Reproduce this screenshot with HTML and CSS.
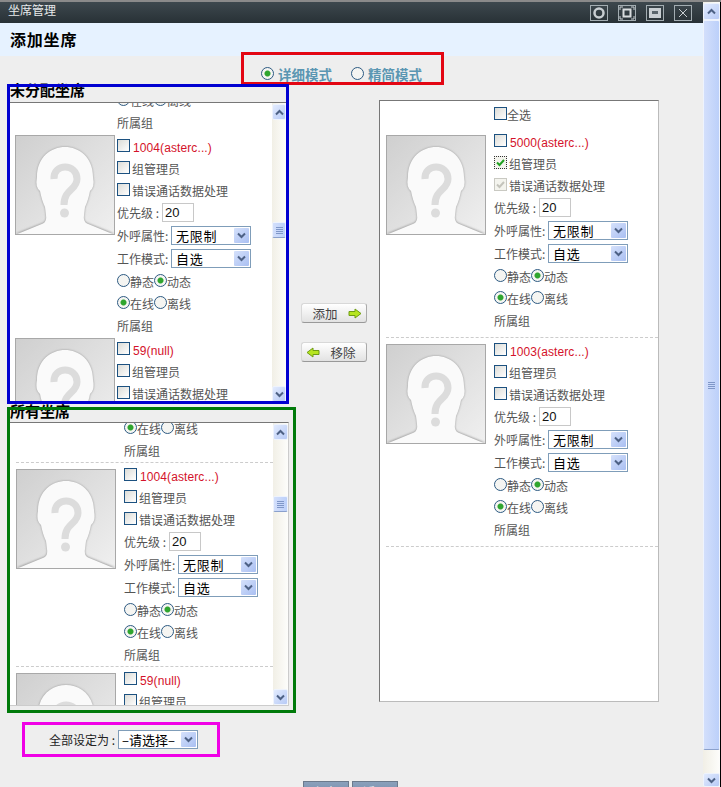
FILE: index.html
```html
<!DOCTYPE html>
<html lang="zh">
<head>
<meta charset="utf-8">
<title>坐席管理</title>
<link rel="stylesheet" href="styles.css">
</head>
<body>
<svg class="defs" aria-hidden="true">
  <defs>
    <linearGradient id="avbg" x1="0" y1="0" x2="1" y2="1">
      <stop offset="0" stop-color="#cfcfcf"/>
      <stop offset="1" stop-color="#f0f0f0"/>
    </linearGradient>
    <filter id="soft" x="-10%" y="-10%" width="120%" height="120%"><feGaussianBlur stdDeviation="1"/></filter>
    <symbol id="avatar" viewBox="0 0 100 100">
      <rect x="0" y="0" width="100" height="100" fill="url(#avbg)"/>
      <path d="M0 99 L28 88 Q32 86 31 80 L30 72 Q27 66 25 56 Q20 52 22 42 C22 22 36 12 50 12 C64 12 78 22 78 42 Q80 52 75 56 Q73 66 70 72 L69 80 Q68 86 72 88 L100 99 Z" fill="#999" filter="url(#soft)"/>
      <path d="M0 100 L28 88.500 Q32 86.500 31 80 L30 72 Q27 66 25 56 Q20 52 22 42 C22 22 36 12 50 12 C64 12 78 22 78 42 Q80 52 75 56 Q73 66 70 72 L69 80 Q68 86.500 72 88.500 L100 100 Z" fill="#fafafa"/>
      <path d="M39 44 C38 28 62 28 62 44 C62 55 49 54 49 70" fill="none" stroke="#dcdcdc" stroke-width="7"/>
      <circle cx="49.500" cy="78" r="4.500" fill="#dcdcdc"/>
      <rect x="0.500" y="0.500" width="99" height="99" fill="none" stroke="#a8a8a8"/>
    </symbol>
    <symbol id="down" viewBox="0 0 9 7"><path d="M1 1.500 L4.500 5 L8 1.500" fill="none" stroke="#4d6185" stroke-width="2"/></symbol>
    <symbol id="up" viewBox="0 0 9 7"><path d="M1 5.500 L4.500 2 L8 5.500" fill="none" stroke="#4d6185" stroke-width="2"/></symbol>
    <symbol id="grip" viewBox="0 0 7 7"><path d="M0 .5H7M0 2.500H7M0 4.500H7M0 6.500H7" stroke="#7f97c8"/></symbol>
    <symbol id="check" viewBox="0 0 11 11"><path d="M2 5.500 L4.500 8 L9 3" fill="none" stroke="currentColor" stroke-width="2"/></symbol>
  </defs>
</svg>

<div class="shell">
  <div class="content">
    <header class="titlebar">
      <span class="titlebar-text">坐席管理</span>
      <div class="winbtns">
        <span class="winbtn"><svg viewBox="0 0 16 14"><circle cx="8" cy="7" r="4.500" fill="none" stroke="#c8ced2" stroke-width="2.500"/></svg></span>
        <span class="winbtn"><svg viewBox="0 0 16 14"><path d="M1 4V1H4M12 1H15V4M15 10V13H12M4 13H1V10" fill="none" stroke="#c8ced2"/><rect x="4.500" y="3.500" width="7" height="7" fill="none" stroke="#d8dcde" stroke-width="2"/></svg></span>
        <span class="winbtn"><svg viewBox="0 0 16 14"><rect x="2" y="2" width="12" height="10" fill="#c8ced2"/><rect x="5" y="5" width="6" height="3" fill="#59646b"/></svg></span>
        <span class="winbtn"><svg viewBox="0 0 16 14"><path d="M4 3L12 11M12 3L4 11" stroke="#c8ced2"/></svg></span>
      </div>
    </header>
    <div class="subheader"><h1 class="page-title">添加坐席</h1></div>

    <div class="mode frame frame-red">
      <span class="radio on"></span><span class="mode-label">详细模式</span>
      <span class="radio mode-radio2"></span><span class="mode-label">精简模式</span>
    </div>

    <div class="main">
      <div class="left-col">
        <section class="frame frame-blue">
          <h2 class="box-title">未分配坐席</h2>
          <div class="panel panel-blue">
            <div class="scroller">
              <div class="tail tail-blue">
                <div class="row"><span class="radio on"></span>在线<span class="radio"></span>离线</div>
                <div class="row">所属组</div>
              </div>
              <div class="card card-plain">
                <svg class="avatar"><use href="#avatar"/></svg>
                <div class="rows">
                  <div class="row"><span class="cb"></span><span class="name">1004(asterc...)</span></div>
                  <div class="row"><span class="cb"></span><span class="lbl">组管理员</span></div>
                  <div class="row"><span class="cb"></span><span class="lbl">错误通话数据处理</span></div>
                  <div class="row row-t"><span class="pri">优先级 :</span><span class="input">20</span></div>
                  <div class="row row-t"><span class="key">外呼属性:</span><div class="select"><span>无限制</span><span class="sel-btn"><svg><use href="#down"/></svg></span></div></div>
                  <div class="row row-t"><span class="key">工作模式:</span><div class="select"><span>自选</span><span class="sel-btn"><svg><use href="#down"/></svg></span></div></div>
                  <div class="row"><span class="radio"></span>静态<span class="radio on"></span>动态</div>
                  <div class="row"><span class="radio on"></span>在线<span class="radio"></span>离线</div>
                  <div class="row">所属组</div>
                </div>
              </div>
              <div class="card card-plain">
                <svg class="avatar"><use href="#avatar"/></svg>
                <div class="rows">
                  <div class="row"><span class="cb"></span><span class="name">59(null)</span></div>
                  <div class="row"><span class="cb"></span><span class="lbl">组管理员</span></div>
                  <div class="row"><span class="cb"></span><span class="lbl">错误通话数据处理</span></div>
                </div>
              </div>
            </div>
            <div class="vbar vbar-blue">
              <span class="sb-btn"><svg><use href="#up"/></svg></span>
              <span class="sb-thumb"><svg><use href="#grip"/></svg></span>
              <span class="sb-btn sb-end"><svg><use href="#down"/></svg></span>
            </div>
          </div>
        </section>

        <section class="frame frame-green">
          <h2 class="box-title">所有坐席</h2>
          <div class="panel panel-green">
            <div class="scroller">
              <div class="tail tail-green">
                <div class="row"><span class="radio on"></span>在线<span class="radio"></span>离线</div>
                <div class="row">所属组</div>
              </div>
              <div class="card card-dash">
                <svg class="avatar"><use href="#avatar"/></svg>
                <div class="rows">
                  <div class="row"><span class="cb"></span><span class="name">1004(asterc...)</span></div>
                  <div class="row"><span class="cb"></span><span class="lbl">组管理员</span></div>
                  <div class="row"><span class="cb"></span><span class="lbl">错误通话数据处理</span></div>
                  <div class="row row-t"><span class="pri">优先级 :</span><span class="input">20</span></div>
                  <div class="row row-t"><span class="key">外呼属性:</span><div class="select"><span>无限制</span><span class="sel-btn"><svg><use href="#down"/></svg></span></div></div>
                  <div class="row row-t"><span class="key">工作模式:</span><div class="select"><span>自选</span><span class="sel-btn"><svg><use href="#down"/></svg></span></div></div>
                  <div class="row"><span class="radio"></span>静态<span class="radio on"></span>动态</div>
                  <div class="row"><span class="radio on"></span>在线<span class="radio"></span>离线</div>
                  <div class="row">所属组</div>
                </div>
              </div>
              <div class="card card-dash">
                <svg class="avatar"><use href="#avatar"/></svg>
                <div class="rows">
                  <div class="row"><span class="cb"></span><span class="name">59(null)</span></div>
                  <div class="row"><span class="cb"></span><span class="lbl">组管理员</span></div>
                </div>
              </div>
            </div>
            <div class="vbar vbar-green">
              <span class="sb-btn"><svg><use href="#up"/></svg></span>
              <span class="sb-thumb"><svg><use href="#grip"/></svg></span>
              <span class="sb-btn sb-end"><svg><use href="#down"/></svg></span>
            </div>
          </div>
        </section>

        <div class="frame frame-pink">
          <span class="setall">全部设定为 :</span>
          <div class="select select-all"><span>–请选择–</span><span class="sel-btn"><svg><use href="#down"/></svg></span></div>
        </div>
      </div>

      <div class="mid-col">
        <button class="move-btn move-add" type="button">添加<svg class="arrow" viewBox="0 0 14 11"><path d="M1 3.500H7V1L13 5.500L7 10V7.500H1Z" fill="#b6e51f" stroke="#6f9c14"/></svg></button>
        <button class="move-btn move-del" type="button"><svg class="arrow" viewBox="0 0 14 11"><path d="M13 3.500H7V1L1 5.500L7 10V7.500H13Z" fill="#b6e51f" stroke="#6f9c14"/></svg>移除</button>
      </div>

      <div class="panel-right">
        <div class="selall"><span class="cb"></span>全选</div>
        <div class="card card-first">
          <svg class="avatar"><use href="#avatar"/></svg>
          <div class="rows">
            <div class="row"><span class="cb"></span><span class="name">5000(asterc...)</span></div>
            <div class="row"><span class="cb cb-on"><svg><use href="#check"/></svg></span><span class="lbl">组管理员</span></div>
            <div class="row"><span class="cb cb-off"><svg><use href="#check"/></svg></span><span class="lbl">错误通话数据处理</span></div>
            <div class="row row-t"><span class="pri">优先级 :</span><span class="input">20</span></div>
            <div class="row row-t"><span class="key">外呼属性:</span><div class="select"><span>无限制</span><span class="sel-btn"><svg><use href="#down"/></svg></span></div></div>
            <div class="row row-t"><span class="key">工作模式:</span><div class="select"><span>自选</span><span class="sel-btn"><svg><use href="#down"/></svg></span></div></div>
            <div class="row"><span class="radio"></span>静态<span class="radio on"></span>动态</div>
            <div class="row"><span class="radio on"></span>在线<span class="radio"></span>离线</div>
            <div class="row">所属组</div>
          </div>
        </div>
        <div class="card card-dash card-wide">
          <svg class="avatar"><use href="#avatar"/></svg>
          <div class="rows">
            <div class="row"><span class="cb"></span><span class="name">1003(asterc...)</span></div>
            <div class="row"><span class="cb"></span><span class="lbl">组管理员</span></div>
            <div class="row"><span class="cb"></span><span class="lbl">错误通话数据处理</span></div>
            <div class="row row-t"><span class="pri">优先级 :</span><span class="input">20</span></div>
            <div class="row row-t"><span class="key">外呼属性:</span><div class="select"><span>无限制</span><span class="sel-btn"><svg><use href="#down"/></svg></span></div></div>
            <div class="row row-t"><span class="key">工作模式:</span><div class="select"><span>自选</span><span class="sel-btn"><svg><use href="#down"/></svg></span></div></div>
            <div class="row"><span class="radio"></span>静态<span class="radio on"></span>动态</div>
            <div class="row"><span class="radio on"></span>在线<span class="radio"></span>离线</div>
            <div class="row">所属组</div>
          </div>
        </div>
        <div class="end-dash"></div>
      </div>
    </div>

    <div class="actions">
      <button class="act-btn" type="button">保存</button>
      <button class="act-btn" type="button">返回</button>
    </div>
  </div>

  <div class="vbar vbar-page">
    <span class="sb-btn"><svg><use href="#up"/></svg></span>
    <span class="sb-thumb"><svg><use href="#grip"/></svg></span>
    <span class="sb-btn sb-end"><svg><use href="#down"/></svg></span>
  </div>
</div>
</body>
</html>
```

FILE: styles.css
```css
* { box-sizing: border-box; }

html, body {
  margin: 0;
  height: 787px;
  overflow: hidden;
}

body {
  font-family: "Noto Sans CJK SC", "Liberation Sans", sans-serif;
  font-size: 12px;
  color: #555;
  background: #eee;
}

.defs { position: absolute; width: 0; height: 0; }

.shell { display: flex; height: 787px; border-top: 2px solid #8a8a8a; }

.content { width: 703px; flex: none; height: 785px; overflow: hidden; }

/* title bar */
.titlebar {
  height: 21px;
  display: flex;
  align-items: center;
  justify-content: space-between;
  padding: 0 11px 0 8px;
  background: linear-gradient(#3d484e, #283136);
}
.titlebar-text { color: #e6e9ea; line-height: 18px; padding-bottom: 5px; }
.winbtns { display: flex; gap: 10px; }
.winbtn {
  width: 18px;
  height: 16px;
  border: 1px solid #a3adb2;
  display: block;
}
.winbtn svg { display: block; width: 16px; height: 14px; }

.subheader { height: 33px; background: #e6f2ff; padding-left: 10px; }
.page-title {
  margin: 0;
  font-size: 16px;
  line-height: 33px;
  font-weight: 700;
  color: #000;
  letter-spacing: .8px;
}

/* annotated frames */
.frame { position: relative; }
.frame::after {
  content: "";
  position: absolute;
  inset: 0;
  border: 3px solid;
  pointer-events: none;
}
.frame-red::after { border-color: #e30613; }
.frame-blue::after { border-color: #0000d0; }
.frame-green::after { border-color: #007a0a; }
.frame-pink::after { border: 3px solid #f000e6; }

.mode {
  width: 203px;
  height: 33px;
  margin: -4px 0 -1px 241px;
  padding: 10px 0 0 20px;
  display: flex;
  align-items: center;
}
.mode-label {
  font-size: 13.500px;
  font-weight: 700;
  color: #5a96b2;
  margin-left: 4px;
  width: 56px;
  white-space: nowrap;
}
.mode-radio2 { margin-left: 17px; }

.main { display: flex; align-items: flex-start; padding-left: 7px; height: 697px; }
.left-col { width: 289px; flex: none; }

.frame-blue { width: 282px; height: 320px; padding: 3px; }
.frame-green { width: 289px; height: 306px; margin-top: 3px; padding: 3px; }

.box-title {
  margin: 0;
  font-size: 15px;
  font-weight: 700;
  line-height: 15px;
  color: #000;
  white-space: nowrap;
}
.frame-blue .box-title { margin-top: -5px; height: 20px; }
.frame-green .box-title { margin-top: -7px; height: 19px; }

.panel {
  display: flex;
  background: #fff;
  border-top: 1px solid #777;
  overflow: hidden;
}
.panel-blue { height: 300px; }
.panel-green { width: 279px; height: 284px; border-bottom: 1px solid #ccc; border-right: 1px solid #ccc; }

.scroller { flex: 1; min-width: 0; overflow: hidden; }

.tail-blue { margin: -13px 0 0 107px; height: 45px; }
.tail-green { margin: -5px 0 0 114px; height: 44px; }

.card { display: flex; }
.avatar { width: 100px; height: 100px; flex: none; display: block; }
.rows { flex: 1; min-width: 0; }

.card-plain { height: 203px; padding-left: 5px; gap: 2px; }
.card-plain .rows { margin-top: 1px; }

.card-dash {
  border-top: 1px dashed #ccc;
  margin-left: 6px;
  padding-top: 2px;
  gap: 8px;
}
.card-dash .avatar { margin-top: 4px; }
.panel-green .card-dash { height: 204px; }

.card-first { margin-left: 6px; gap: 8px; height: 206px; }
.card-first .avatar { margin-top: 4px; }
.card-wide { height: 209px; }

.row {
  display: flex;
  align-items: flex-start;
  height: 22px;
  line-height: 22px;
  white-space: nowrap;
}
.row-t { height: 23px; }

.cb {
  width: 13px;
  height: 13px;
  flex: none;
  margin-top: 3px;
  border: 1px solid #1c5180;
  background: linear-gradient(135deg, #dcdcd7, #fff);
  display: block;
}
.cb svg { display: block; width: 11px; height: 11px; }
.cb-on { color: #21a121; border: 1px dotted #333; background: #f4f4ee; }
.cb-off { color: #c4c4bc; border-color: #c9c9c2; background: #f4f4ee; }

.name {
  font-family: "Liberation Sans", sans-serif;
  color: #d4122a;
  margin-left: 3px;
  letter-spacing: .1px;
  padding-top: 1px;
}
.lbl { margin-left: 2px; }

.radio {
  width: 13px;
  height: 13px;
  flex: none;
  margin-top: 3px;
  border: 1px solid #2d5a82;
  border-radius: 50%;
  background: #f5f5f2;
  display: block;
  position: relative;
}
.radio.on { background: radial-gradient(circle, #2fa52f 0 2.500px, #f5f5f2 3.500px); }
.mode .radio { margin-top: 0; }

.pri { width: 45px; flex: none; }
.key { width: 54px; flex: none; }
.input {
  width: 32px;
  height: 19px;
  margin-top: 1px;
  border: 1px solid #c8c8c8;
  background: #fff;
  font-family: "Liberation Sans", sans-serif;
  font-size: 13px;
  line-height: 17px;
  color: #111;
  padding-left: 2px;
}

.select {
  width: 80px;
  height: 19px;
  margin-top: 1px;
  flex: none;
  border: 1px solid #7f9db9;
  background: #fff;
  display: flex;
  justify-content: space-between;
  font-size: 13px;
  line-height: 17px;
  letter-spacing: .7px;
  color: #000;
  padding: 0 1px 0 4px;
}
.sel-btn {
  width: 15px;
  height: 15px;
  margin-top: 1px;
  border-radius: 1px;
  background: linear-gradient(135deg, #d5e1fb, #a9bff2);
  display: flex;
  align-items: center;
  justify-content: center;
}
.sel-btn svg { width: 9px; height: 7px; display: block; }

.frame-pink {
  width: 198px;
  height: 35px;
  margin: 9px 0 0 15px;
  display: flex;
  align-items: center;
  padding-left: 27px;
  color: #222;
}
.setall { width: 69px; flex: none; line-height: 19px; }
.select-all { letter-spacing: 0; padding-left: 3px; margin-top: 0; }

/* scrollbars */
.vbar {
  width: 15px;
  flex: none;
  display: flex;
  flex-direction: column;
  background: linear-gradient(90deg, #f1efe6, #fdfdfb);
}
.sb-btn {
  height: 16px;
  flex: none;
  display: flex;
  align-items: center;
  justify-content: center;
  background: linear-gradient(135deg, #e2ebfe, #b7caf6);
  border: 1px solid #eef3fd;
  border-radius: 2px;
}
.sb-btn svg { width: 9px; height: 7px; display: block; }
.sb-thumb {
  flex: none;
  height: 16px;
  display: flex;
  align-items: center;
  justify-content: center;
  background: linear-gradient(90deg, #d3dffb, #bcd0fa);
  border: 1px solid #eef3fd;
  border-bottom-color: #8aa0cc;
  border-radius: 2px;
}
.sb-thumb svg { width: 7px; height: 7px; display: block; }
.sb-end { margin-top: auto; }

.vbar-blue { width: 14px; padding-top: 1px; }
.vbar-blue .sb-thumb { margin-top: 102px; }
.vbar-green { padding-top: 1px; width: 15px; }
.vbar-green .sb-thumb { margin-top: 56px; }
.vbar-page {
  width: 18px;
  height: 785px;
  border-right: 1px solid #000;
  padding-top: 1px;
}
.vbar-page .sb-btn { height: 17px; }
.vbar-page .sb-thumb { height: 730px; }
.vbar-page .sb-end { height: 14px; }

/* middle buttons */
.mid-col {
  width: 66px;
  flex: none;
  margin: 219px 0 0 5px;
  display: flex;
  flex-direction: column;
  gap: 19px;
}
.move-btn {
  width: 66px;
  height: 20px;
  padding: 0;
  display: flex;
  align-items: center;
  justify-content: center;
  gap: 10px;
  font: inherit;
  font-size: 12.500px;
  color: #444;
  background: linear-gradient(#fff, #e2e2e2);
  border: 1px solid #d8d8d8;
  border-bottom-color: #999;
  border-right-color: #aaa;
  border-radius: 3px;
}
.move-add { padding-left: 6px; }
.move-del { padding-right: 6px; }
.arrow { width: 14px; height: 11px; flex: none; }

/* right panel */
.panel-right {
  width: 280px;
  height: 602px;
  flex: none;
  margin: 16px 0 0 12px;
  background: #fff;
  border: 1px solid #bbb;
  border-top-color: #777;
  border-left-color: #777;
}
.selall {
  height: 30px;
  padding: 3px 0 0 114px;
  display: flex;
  align-items: flex-start;
  line-height: 22px;
}
.selall .cb { margin-top: 3px; }
.end-dash { border-top: 1px dashed #ccc; margin-left: 6px; }

/* bottom actions */
.actions {
  display: flex;
  gap: 3px;
  padding-left: 303px;
}
.act-btn {
  width: 46px;
  height: 20px;
  padding: 0;
  font: inherit;
  color: #fff;
  background: linear-gradient(#8aa0bb, #6f87a5);
  border: 1px solid #6c7a8c;
}
```
